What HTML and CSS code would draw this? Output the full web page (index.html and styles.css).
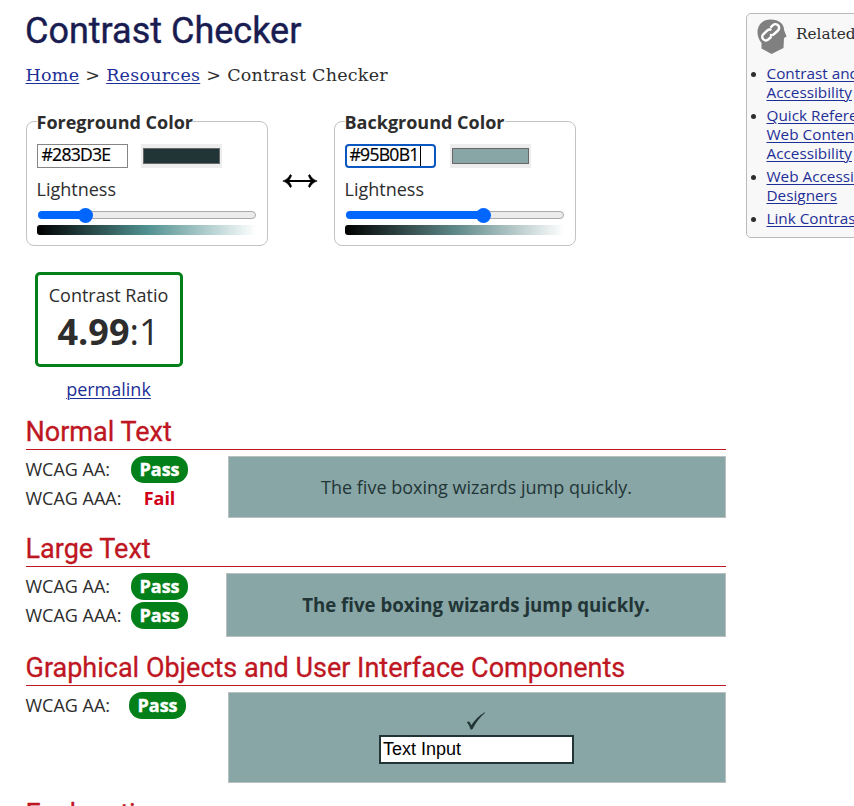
FILE: index.html
```
<!DOCTYPE html>
<html lang="en">
<head>
<meta charset="utf-8">
<title>Contrast Checker</title>
<link rel="stylesheet" href="styles.css">
</head>
<body>
<div class="page">
  <main class="content">
    <h1><span>Contrast Checker</span></h1>
    <nav class="crumbs"><a href="#">Home</a><span class="sep">&gt;</span><a href="#">Resources</a><span class="sep">&gt;</span><span>Contrast Checker</span></nav>
    <div class="pickers">
      <section class="picker fore">
        <h2 class="legend"><span>Foreground Color</span></h2>
        <div class="inputs"><div class="hex"><span>#283D3E</span></div><div class="swatch"><i></i></div></div>
        <div class="label"><span>Lightness</span></div>
        <div class="slider"><div class="fill"></div><div class="thumb"></div></div>
        <div class="gradient"></div>
      </section>
      <svg class="swap" viewBox="0 0 36 16" aria-hidden="true"><path d="M4 8H32" stroke="#000" stroke-width="2"/><path d="M0.8 8C4.5 6.800 6.800 4.500 8.300 1.500L9.600 2.600Q8.800 5.200 6.500 8Q8.800 10.800 9.600 13.400L8.300 14.500C6.800 11.500 4.500 9.200 .8 8ZM35.200 8C31.500 6.800 29.200 4.500 27.700 1.500L26.400 2.600Q27.200 5.200 29.500 8Q27.200 10.800 26.400 13.400L27.700 14.500C29.200 11.500 31.500 9.200 35.200 8Z" stroke="#000" stroke-width=".6"/></svg>
      <section class="picker back">
        <h2 class="legend"><span>Background Color</span></h2>
        <div class="inputs"><div class="hex focus"><span>#95B0B1</span><b class="caret"></b></div><div class="swatch"><i></i></div></div>
        <div class="label"><span>Lightness</span></div>
        <div class="slider"><div class="fill"></div><div class="thumb"></div></div>
        <div class="gradient"></div>
      </section>
    </div>
    <div class="result">
      <div class="ratio"><div class="cap"><span>Contrast Ratio</span></div><div class="num"><span><b>4.99</b>:1</span></div></div>
      <a class="permalink" href="#">permalink</a>
    </div>
    <h2 class="head normal"><span>Normal Text</span></h2>
    <div class="row">
      <div class="levels">
        <div class="level"><span class="name">WCAG AA:</span><b class="pass">Pass</b></div>
        <div class="level"><span class="name">WCAG AAA:</span><b class="fail">Fail</b></div>
      </div>
      <div class="sample small"><span>The five boxing wizards jump quickly.</span></div>
    </div>
    <h2 class="head large"><span>Large Text</span></h2>
    <div class="row">
      <div class="levels">
        <div class="level"><span class="name">WCAG AA:</span><b class="pass">Pass</b></div>
        <div class="level"><span class="name">WCAG AAA:</span><b class="pass">Pass</b></div>
      </div>
      <div class="sample big"><span>The five boxing wizards jump quickly.</span></div>
    </div>
    <h2 class="head graphic"><span>Graphical Objects and User Interface Components</span></h2>
    <div class="row">
      <div class="levels narrow">
        <div class="level"><span class="name">WCAG AA:</span><b class="pass">Pass</b></div>
      </div>
      <div class="sample ui">
        <svg class="check" viewBox="0 0 20 18" aria-hidden="true"><path d="M.8 10.600Q2.200 9.200 3.200 9.600Q4.200 10.200 5.200 13.200Q11 4.600 18.800.2L19.200.7Q11.500 7 6.600 17L4.700 17.800Q2.800 12 .8 10.600Z"/></svg>
        <div class="field"><span>Text Input</span></div>
      </div>
    </div>
    <h2 class="head explain"><span>Explanation</span></h2>
  </main>
  <aside class="related">
    <div class="related-head">
      <svg class="bulb" viewBox="0 0 30 36" aria-hidden="true"><path fill="#808080" d="M13.500 .5C22 .5 27 4.500 27.200 11.500L29.600 17.500L27 19L26.500 29L14.500 35L4.500 29.500V24C-3 15 0 .5 13.500 .5Z"/><g fill="none" stroke="#fff" stroke-width="2.200" stroke-linecap="round" transform="translate(13.700 13.300) rotate(-43) scale(1.130)"><path d="M1.500-2A3.200 3.200 0 0 0-1-3.200H-5.800A3.200 3.200 0 0 0-5.800 3.200H-3"/><path d="M-1.500 2A3.200 3.200 0 0 0 1 3.200H5.800A3.200 3.200 0 0 0 5.800-3.200H3.500"/></g></svg>
      <span>Related Resources</span>
    </div>
    <ul>
      <li><a href="#">Contrast and Color<br>Accessibility</a></li>
      <li><a href="#">Quick Reference:<br>Web Content<br>Accessibility</a></li>
      <li><a href="#">Web Accessibility for<br>Designers</a></li>
      <li><a href="#">Link Contrast Checker</a></li>
    </ul>
  </aside>
</div>
</body>
</html>
```
FILE: styles.css
```
* { box-sizing: border-box; }
body { margin: 0; width: 854px; height: 806px; overflow: hidden; background: #fff; color: #2d2d2d; font-family: "Open Sans", sans-serif; font-size: 18px; }
a { color: #1e2f97; text-decoration-thickness: 1px; text-underline-offset: 2px; }
h1, h2 { margin: 0; font-weight: 400; }
span { white-space: nowrap; }
.page { display: flex; width: 854px; height: 806px; overflow: hidden; }
.content { width: 700px; margin-left: 26px; flex: none; }
h1 { height: 60px; font: 36px/62px Roboto, sans-serif; color: #191c51; -webkit-text-stroke: 0.4px; margin-left: -1px; }
.crumbs { height: 30px; font: 17.500px/30px "DejaVu Serif", serif; letter-spacing: 0.250px; display: flex; margin-left: -0.500px; }
.sep { margin: 0 6px; }
.pickers { display: flex; margin-top: 31px; height: 125px; }
.picker { width: 242px; height: 125px; border: 1px solid #c3c3c3; border-radius: 8px; padding: 0 10px; }
.legend { font-size: 18px; font-weight: 700; line-height: 24px; height: 24px; margin-top: -12px; }
.legend span { background: #fff; display: inline-block; text-indent: -0.5px; }
.inputs { display: flex; margin-top: 10px; gap: 13px; }
.hex { width: 91px; height: 24px; border: 1px solid #858585; padding-left: 3.500px; color: #000; font-size: 17.6px; letter-spacing: -0.75px; line-height: 19px; display: flex; }
.hex.focus { border: 2px solid #0b57c2; border-radius: 4px; padding-left: 2.500px; line-height: 17px; }
.hex span { -webkit-text-stroke: 0.2px; }
.caret { width: 1px; height: 20px; background: #000; margin-left: 1px; }
.swatch { width: 81px; height: 24px; background: #ededed; padding: 4px 2px; }
.back .swatch { margin-left: 1px; }
.swatch i { display: block; height: 16px; background: #223536; border: 1px solid #686868; }
.back .swatch i { background: #88a6a6; }
.label { height: 24px; line-height: 24px; margin-top: 9px; text-indent: -0.5px; }
.slider { margin: 10px 0 0 1px; width: 218px; height: 8px; border: 1px solid #aaa; border-radius: 4px; background: #ebebeb; display: flex; align-items: center; }
.fill { height: 8px; width: 46px; margin: 0 -1px; border-radius: 4px; background: #0066fe; flex: none; }
.back .fill { width: 136px; }
.thumb { width: 15px; height: 15px; border-radius: 50%; background: #0066fe; margin-left: -5.500px; flex: none; }
.gradient { width: 219px; height: 10px; margin-top: 6px; border-radius: 3px; background: linear-gradient(90deg, #000, #509090 50%, #fff); }
.back .gradient { background: linear-gradient(90deg, #000, #5d8787 50%, #fff); }
.swap { width: 36px; height: 16px; margin: 52px 16px 0 14px; flex: none; }
.result { width: 148px; margin: 26px 0 0 9px; text-align: center; }
.ratio { height: 95px; border: 3px solid #038019; border-radius: 5px; padding-top: 8px; }
.cap { line-height: 24px; text-indent: -1px; }
.num { font-size: 36px; line-height: 50px; text-indent: -1px; }
.permalink { display: block; line-height: 24px; margin-top: 10px; text-indent: -1px; }
.head { font: 27px/34px Roboto, sans-serif; color: #be1622; border-bottom: 1px solid #be1622; height: 35px; -webkit-text-stroke: 0.3px; }
.head span { margin-left: -0.5px; }
.normal { margin-top: 14px; }
.large { margin-top: 14px; }
.graphic { margin-top: 14px; }
.explain { margin-top: 14px; }
.row { display: flex; justify-content: space-between; align-items: flex-start; padding-top: 6px; }
.level { display: flex; height: 29px; line-height: 27px; }
.name { width: 105px; text-indent: -0.5px; }
.narrow .name { width: 103px; }
.pass { width: 57px; height: 27px; border-radius: 13px; background: #038019; color: #fff; text-align: center; -webkit-text-stroke: 0.4px; }
.fail { width: 57px; text-align: center; color: #d00019; }
.sample { width: 498px; border: 1px solid #b9c0c0; background: #88a6a6; color: #223536; text-align: center; }
.small { height: 62px; line-height: 61px; text-indent: -1px; }
.big { width: 500px; height: 64px; line-height: 62px; font-size: 18.660px; font-weight: 700; }
.ui { height: 91px; }
.check { display: block; width: 20px; height: 18px; margin: 19px 0 0 237px; fill: #223536; }
.field { width: 195px; height: 29px; margin: 5px 0 0 150px; border: 2px solid #223536; background: #fff; color: #000; font: 18px/24px "Liberation Sans", sans-serif; text-align: left; padding-left: 2px; }
.related { margin: 13px 0 0 20px; width: 250px; height: 225px; border: 1px solid #bbb; border-radius: 5px; background: #f8f8f8; flex: none; font-size: 15.300px; }
.related-head { display: flex; font: 15.300px/40px "DejaVu Serif", serif; height: 50px; padding-left: 10px; }
.bulb { width: 30px; height: 36px; margin: 5px 9px 0 0; }
ul { margin: 0; padding: 0 0 0 19.500px; }
li { line-height: 19px; margin-bottom: 4px; white-space: nowrap; }
li::marker { font-size: 13px; }
```
